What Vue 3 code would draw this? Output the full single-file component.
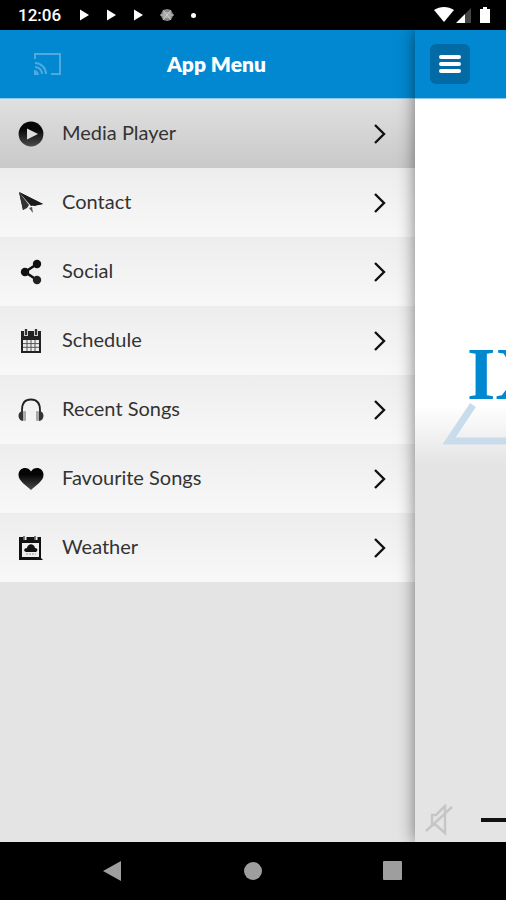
<script setup>
import { ref } from 'vue';

const active = ref('media')
const volume = ref(0)

const items = [
  { id: 'media', label: 'Media Player' },
  { id: 'contact', label: 'Contact' },
  { id: 'social', label: 'Social' },
  { id: 'schedule', label: 'Schedule' },
  { id: 'recent', label: 'Recent Songs' },
  { id: 'favourite', label: 'Favourite Songs' },
  { id: 'weather', label: 'Weather' },
]
</script>

<template>
  <div class="device">
    <div class="status-bar">
      <span class="clock">12:06</span>
      <svg v-for="n in 3" :key="n" class="status-play" viewBox="0 0 10 12"><path d="M1 0.500l9 5.500-9 5.500z" /></svg>
      <svg class="status-sync" viewBox="0 0 14 14">
        <circle cx="7" cy="7" r="6" />
        <path d="M0 7h14M3 2l8 10M11 2L3 12M3 5h8M3 9h8" />
      </svg>
      <span class="status-dot"></span>
      <svg class="status-right" viewBox="0 0 58 18">
        <path d="M0 4C6 0 14 0 20 4L10 16z" />
        <path class="dim" d="M31 8l6-6v15h-6z" />
        <path d="M22 17l9-9v9z" />
        <path d="M46 3h3V1h4v2h3v14H46z" />
      </svg>
    </div>

    <div class="stage">
      <aside class="drawer">
        <header class="bar drawer-bar">
          <button class="cast" aria-label="Cast">
            <svg viewBox="0 0 28 24">
              <path d="M1 7V2h25v20H17M1 11a11 11 0 0 1 11 11M1 15a7 7 0 0 1 7 7" />
              <path class="solid" d="M0 18a5 5 0 0 1 5 5H0z" />
            </svg>
          </button>
          <h1>App Menu</h1>
        </header>
        <nav>
          <a
            v-for="item in items" :key="item.id"
            href="#" class="item" :class="{ active: active === item.id }"
            @click.prevent="active = item.id"
          >
            <svg class="icon" viewBox="0 0 26 26">
              <defs>
                <linearGradient :id="'g-' + item.id" x1="0" y1="0" x2="0" y2="1">
                  <stop offset="0.3" stop-color="#050505" />
                  <stop offset="1" stop-color="#4c4c4c" />
                </linearGradient>
              </defs>
              <template v-if="item.id === 'media'">
                <circle cx="13" cy="13" r="12.4" :fill="`url(#g-${item.id})`" />
                <path d="M9 7.5l11 5.5-11 5.5z" fill="#ddd" />
              </template>
              <template v-else-if="item.id === 'contact'">
                <path d="M1 2l24 12-9 2z" fill="#111" />
                <path d="M1 2l4 18 5-4z" fill="#1c1c1c" />
                <path d="M1 2l10 13-2 3-4 2z" fill="#333" />
                <path d="M1 2l12 14 12-2z" fill="#1c1c1c" />
                <path d="M11 18l3-1 1 6z" fill="#555" />
              </template>
              <template v-else-if="item.id === 'social'">
                <path d="M19 5L7 13l12 8" fill="none" stroke="#111" stroke-width="2.6" />
                <circle cx="19" cy="5" r="4.2" fill="#111" />
                <circle cx="7" cy="13" r="4.2" fill="#111" />
                <circle cx="19" cy="21" r="4.2" fill="#222" />
              </template>
              <template v-else-if="item.id === 'schedule'">
                <path d="M3 3h20v22H3z" fill="#222" />
                <path d="M5 12h16v11H5z" fill="#eee" />
                <path d="M9 12v11M13 12v11M17 12v11M5 15.6h16M5 19.3h16" stroke="#555" stroke-width="1" />
                <path d="M8 1v7M18 1v7" stroke="#ccc" stroke-width="4" />
                <path d="M8 1v6M18 1v6" stroke="#333" stroke-width="2" />
              </template>
              <template v-else-if="item.id === 'recent'">
                <path d="M4 17v-4C4 6 7 2.500 13 2.500S22 6 22 13v4" fill="none" stroke="#222" stroke-width="1.800" />
                <rect x="5" y="14" width="3" height="10" rx="1" fill="#aaa" />
                <rect x="18" y="14" width="3" height="10" rx="1" fill="#aaa" />
                <path d="M5 14c-6 0-6 9 0 10zM21 14c6 0 6 9 0 10z" fill="#333" />
              </template>
              <template v-else-if="item.id === 'favourite'">
                <path
                  d="M13 24C8 19 0.500 15 0.500 9 0.500 1 10 0 13 5.500 16 0 25.500 1 25.500 9 25.500 15 18 19 13 24z"
                  :fill="`url(#g-${item.id})`"
                />
              </template>
              <template v-else>
                <path d="M1 2h22v21l2 2H1z" fill="#111" />
                <path d="M4 8h17v14H4z" fill="#eee" />
                <path d="M8 17c-3-1-2-4 1-4 1-5 7-5 8 0 3 0 3 3 1 4z" fill="#111" />
                <path d="M8 19h10" stroke="#999" stroke-dasharray="2 1" />
                <path d="M7 0v5M18 0v5" stroke="#eee" stroke-width="3" />
                <path d="M6 1v4M17 1v4" stroke="#555" stroke-width="1.500" />
              </template>
            </svg>
            <span class="label">{{ item.label }}</span>
            <svg class="chevron" viewBox="0 0 12 20"><path d="M1 1l9 9-9 9" /></svg>
          </a>
        </nav>
      </aside>

      <main class="player">
        <header class="bar player-bar">
          <button class="menu" aria-label="Menu">
            <svg viewBox="0 0 22 20"><path d="M2 3h18M2 10h18M2 17h18" /></svg>
          </button>
        </header>
        <div class="logo">
          <span class="logo-text">IX</span>
          <svg class="logo-shape" viewBox="0 0 200 44"><path d="M30 2L6 38H195" /></svg>
        </div>
        <div class="volume">
          <svg class="mute" viewBox="0 0 28 32">
            <path d="M7 11h4l9-9v27l-9-8H7zM1 27L27 3" />
          </svg>
          <input v-model="volume" type="range" min="0" max="100" aria-label="Volume">
        </div>
      </main>
    </div>

    <div class="nav-bar">
      <button aria-label="Back"><svg viewBox="0 0 20 20"><path d="M0 10L18 0v20z" /></svg></button>
      <button aria-label="Home"><svg viewBox="0 0 20 20"><circle cx="10" cy="10" r="9" /></svg></button>
      <button aria-label="Recents"><svg viewBox="0 0 20 20"><rect width="19" height="19" rx="1" /></svg></button>
    </div>
  </div>
</template>

<style>
body {
  margin: 0;
  background: #000;
}
</style>

<style scoped>
.device {
  display: flex;
  flex-direction: column;
  min-height: 100vh;
  background: #000;
  font-family: Lato, "Open Sans", sans-serif;
}

svg {
  display: block;
}

button {
  padding: 0;
  border: 0;
  background: none;
}

.status-bar {
  display: flex;
  align-items: center;
  height: 30px;
  padding: 0 14px 0 18px;
  box-sizing: border-box;
}

.status-bar path {
  fill: #fff;
}

.clock {
  margin-right: 18px;
  color: #fff;
  font: 500 17px/30px Roboto, sans-serif;
}

.status-play {
  width: 10px;
  height: 12px;
  margin-right: 17px;
}

.status-bar .status-sync {
  width: 14px;
  height: 14px;
  margin-right: 17px;
}

.status-bar .status-sync circle {
  fill: #888;
}

.status-bar .status-sync path {
  fill: none;
  stroke: #ccc;
}

.status-dot {
  width: 5px;
  height: 5px;
  border-radius: 50%;
  background: #fff;
}

.status-right {
  width: 58px;
  height: 18px;
  margin-left: auto;
}

.status-bar .dim {
  fill: #444;
}

.stage {
  flex: 1;
  display: flex;
  overflow: hidden;
  background: #e4e4e4;
}

.drawer {
  flex: 0 0 82%;
}

.bar {
  height: 69px;
  display: flex;
  align-items: center;
  box-sizing: border-box;
  background: #0288d1;
  border-bottom: 1px solid #8cc8ea;
}

.drawer-bar {
  display: grid;
  grid-template-columns: 62px 1fr 62px;
}

.cast {
  justify-self: end;
}

.cast svg {
  width: 28px;
  height: 24px;
  fill: none;
  stroke: #4faade;
  stroke-width: 2;
}

.cast .solid {
  fill: #4faade;
  stroke: none;
}

h1 {
  margin: 0;
  padding-left: 18px;
  color: #fff;
  font-size: 21px;
  font-weight: 800;
  line-height: 24px;
  text-align: center;
}

.item {
  display: flex;
  align-items: center;
  box-sizing: border-box;
  height: 69px;
  padding: 0 29px 0 18px;
  color: #333;
  text-decoration: none;
  background: linear-gradient(#ededed, #f8f8f8);
}

.item.active {
  background: linear-gradient(#e0e0e0, #c9c9c9);
}

.icon {
  width: 26px;
  height: 26px;
  margin-right: 18px;
}

.label {
  flex: 1;
  padding-bottom: 3px;
  font-size: 20px;
  line-height: 24px;
}

.chevron {
  width: 12px;
  height: 20px;
  fill: none;
  stroke: #111;
  stroke-width: 2.4;
}

.player {
  flex: 0 0 100%;
  display: flex;
  flex-direction: column;
  background: linear-gradient(#fff 375px, #e4e4e4 435px);
  box-shadow: 0 0 16px rgba(0, 0, 0, 0.5);
}

.player-bar {
  padding-left: 15px;
}

.menu {
  display: grid;
  place-items: center;
  width: 40px;
  height: 40px;
  border-radius: 6px;
  background: #026ba5;
}

.menu svg {
  width: 22px;
  height: 20px;
  fill: none;
  stroke: #fff;
  stroke-width: 4;
  stroke-linecap: round;
}

.logo {
  flex: 1;
  padding: 248px 0 0 28px;
}

.logo-text {
  display: block;
  padding-left: 24px;
  color: #0288d1;
  font: bold 73px/56px "Liberation Serif", serif;
}

.logo-shape {
  width: 200px;
  height: 44px;
  fill: none;
  stroke: #c9dcec;
  stroke-width: 7;
}

.volume {
  display: flex;
  align-items: center;
  gap: 28px;
  height: 44px;
  padding-left: 10px;
}

.mute {
  width: 28px;
  height: 32px;
  fill: none;
  stroke: #c6c6c6;
  stroke-width: 2.5;
}

.volume input {
  appearance: none;
  flex: 1;
  height: 4px;
  margin: 0;
  background: #111;
}

.volume input::-webkit-slider-thumb {
  appearance: none;
  width: 0;
}

.nav-bar {
  display: flex;
  justify-content: center;
  gap: 120px;
  height: 58px;
}

.nav-bar svg {
  width: 20px;
  height: 20px;
  fill: #9e9e9e;
}
</style>
